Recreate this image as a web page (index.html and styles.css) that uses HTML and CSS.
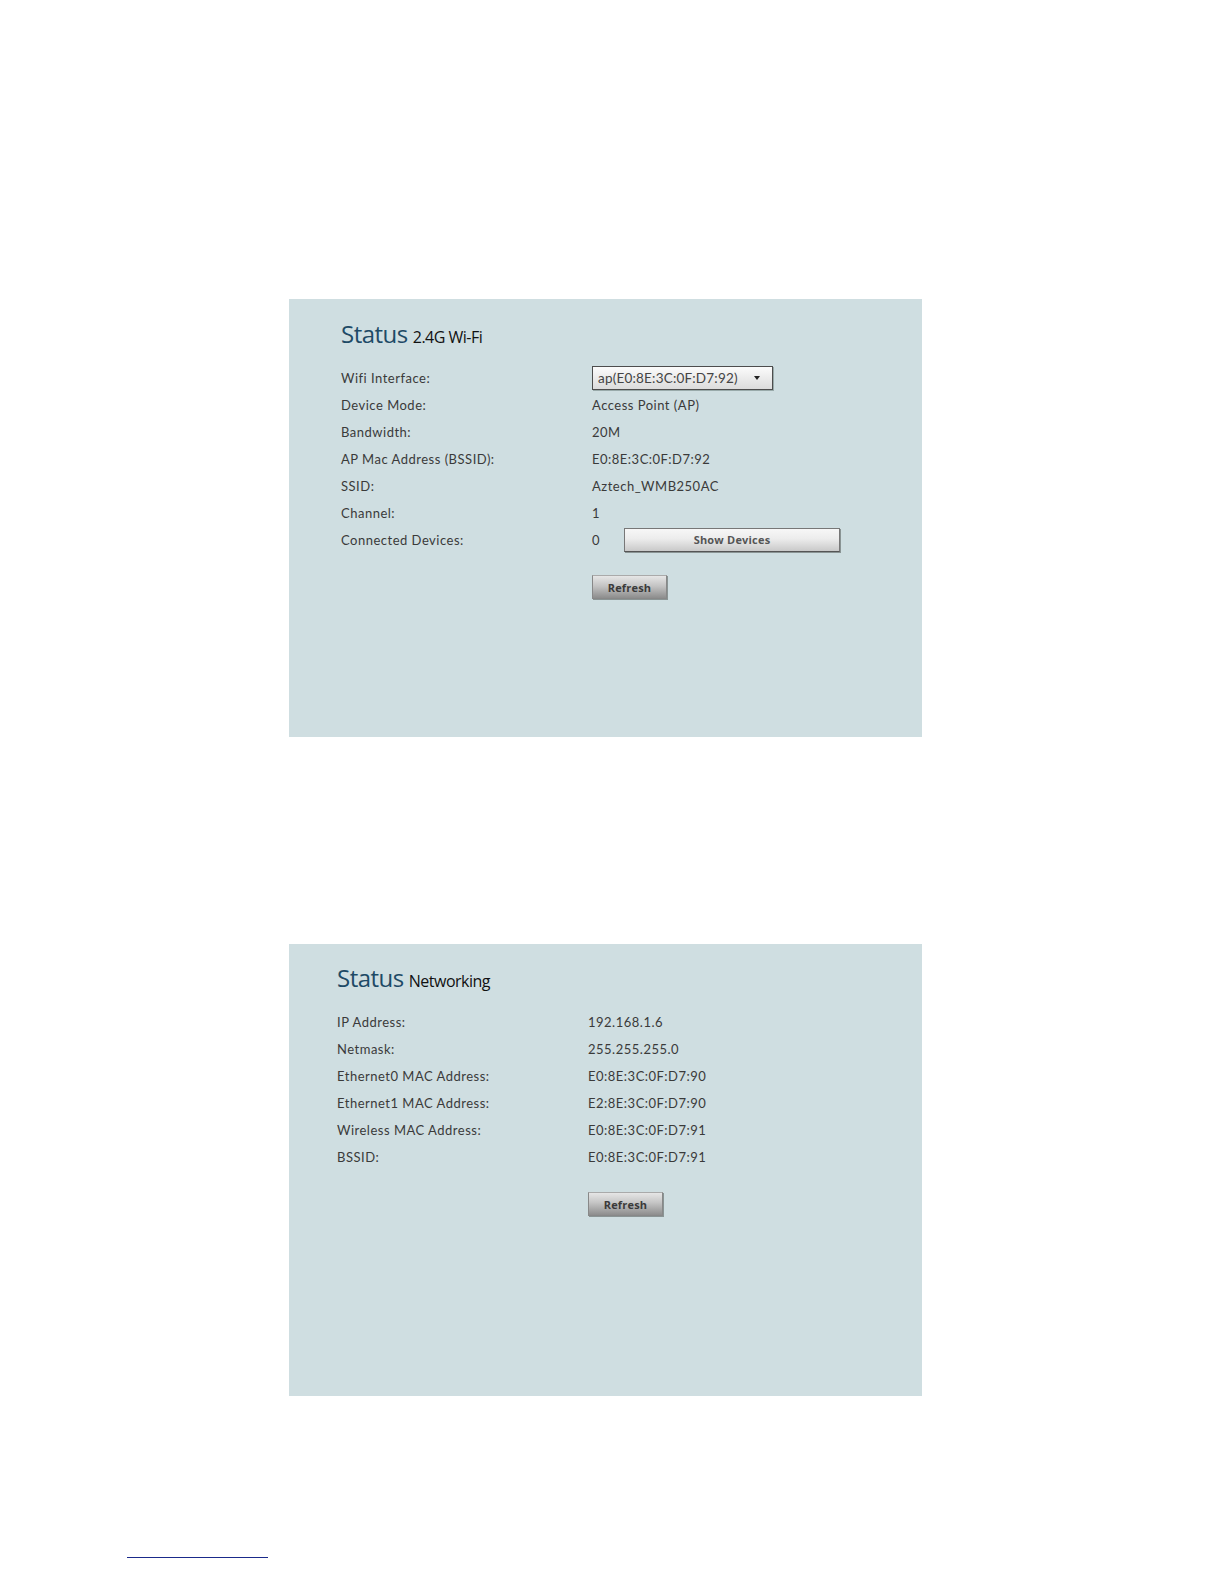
FILE: index.html
```html
<!DOCTYPE html>
<html>
<head>
<meta charset="utf-8">
<link rel="stylesheet" href="styles.css">
</head>
<body>
<div class="page">
  <section class="panel panel-wifi">
    <h1 class="title"><span class="title-main">Status</span><span class="title-sub">2.4G Wi-Fi</span></h1>
    <div class="rows">
      <div class="label">Wifi Interface:</div>
      <div class="value"><div class="select"><span>ap(E0:8E:3C:0F:D7:92)</span><span class="arrow"></span></div></div>
      <div class="label">Device Mode:</div>
      <div class="value">Access Point (AP)</div>
      <div class="label">Bandwidth:</div>
      <div class="value">20M</div>
      <div class="label">AP Mac Address (BSSID):</div>
      <div class="value">E0:8E:3C:0F:D7:92</div>
      <div class="label">SSID:</div>
      <div class="value">Aztech_WMB250AC</div>
      <div class="label">Channel:</div>
      <div class="value">1</div>
      <div class="label">Connected Devices:</div>
      <div class="value"><span class="count">0</span><button class="btn btn-wide">Show Devices</button></div>
      <div class="label"></div>
      <div class="value action"><button class="btn btn-refresh">Refresh</button></div>
    </div>
  </section>

  <section class="panel panel-net">
    <h1 class="title"><span class="title-main">Status</span><span class="title-sub">Networking</span></h1>
    <div class="rows">
      <div class="label">IP Address:</div>
      <div class="value">192.168.1.6</div>
      <div class="label">Netmask:</div>
      <div class="value">255.255.255.0</div>
      <div class="label">Ethernet0 MAC Address:</div>
      <div class="value">E0:8E:3C:0F:D7:90</div>
      <div class="label">Ethernet1 MAC Address:</div>
      <div class="value">E2:8E:3C:0F:D7:90</div>
      <div class="label">Wireless MAC Address:</div>
      <div class="value">E0:8E:3C:0F:D7:91</div>
      <div class="label">BSSID:</div>
      <div class="value">E0:8E:3C:0F:D7:91</div>
      <div class="label"></div>
      <div class="value action"><button class="btn btn-refresh">Refresh</button></div>
    </div>
  </section>

  <div class="footnote-rule"></div>
</div>
</body>
</html>
```

FILE: styles.css
```css
html, body {
  margin: 0;
  padding: 0;
  background: #ffffff;
}

.page {
  padding-top: 299px;
  padding-bottom: 20px;
  font-family: "Lato", "Liberation Sans", sans-serif;
  color: #333333;
}

.panel {
  margin-left: 289px;
  width: 633px;
  background: #cfdee1;
  box-sizing: border-box;
}

.panel-wifi {
  height: 438px;
  padding: 16px 0 0 52px;
}

.panel-net {
  margin-top: 207px;
  height: 452px;
  padding: 15px 0 0 48px;
}

.title {
  margin: 0;
  height: 32px;
  line-height: 32px;
  font-weight: normal;
  white-space: nowrap;
}

.title-main {
  font-family: "Open Sans", "Liberation Sans", sans-serif;
  font-size: 24px;
  color: #1e4a66;
  letter-spacing: -0.5px;
}

.title-sub {
  margin-left: 5px;
  font-family: "Open Sans", "Liberation Sans", sans-serif;
  font-size: 16px;
  color: #111111;
  letter-spacing: -0.5px;
}

.rows {
  margin-top: 17px;
  display: grid;
  grid-template-columns: 251px 1fr;
  grid-auto-rows: 27px;
  font-size: 13px;
}

.label, .value {
  display: flex;
  align-items: center;
  white-space: nowrap;
  letter-spacing: 0.5px;
}

.label {
  color: #3a3a3a;
}

.value {
  color: #3a3a3a;
}

.value.action {
  margin-top: 22px;
  align-items: flex-start;
}

.select {
  width: 181px;
  height: 24px;
  box-sizing: border-box;
  border: 1px solid #4d4d4d;
  background: linear-gradient(#fbfbfb, #dcdcdc);
  display: flex;
  align-items: center;
  padding-left: 5px;
  font-size: 13.5px;
  color: #444;
  letter-spacing: 0.2px;
  box-shadow: 1px 1px 0 #9aa;
}

.arrow {
  margin-left: 16px;
  width: 0;
  height: 0;
  border-left: 3.5px solid transparent;
  border-right: 3.5px solid transparent;
  border-top: 4px solid #222;
}

.count {
  width: 32px;
}

.btn {
  font-family: "Open Sans", "Liberation Sans", sans-serif;
  font-weight: bold;
  font-size: 11px;
  padding: 0;
  box-sizing: border-box;
  letter-spacing: 0.2px;
  cursor: pointer;
}

.btn-wide {
  width: 216px;
  height: 24px;
  border: 1px solid #777;
  border-bottom-color: #555;
  background: linear-gradient(#f7f7f7 0%, #ececec 45%, #c9c9c9 100%);
  color: #555;
  box-shadow: 1px 1px 0 #8a9494;
}

.btn-refresh {
  width: 75px;
  height: 24px;
  border: 1px solid #888;
  border-top-color: #aaa;
  background: linear-gradient(#e6e6e6 0%, #c4c4c4 45%, #8d8d8d 100%);
  color: #3a3a3a;
  box-shadow: 1px 1px 0 #8a9494;
}

.footnote-rule {
  margin-top: 161px;
  margin-left: 127px;
  width: 141px;
  height: 1px;
  background: #1a2a8a;
}
```
